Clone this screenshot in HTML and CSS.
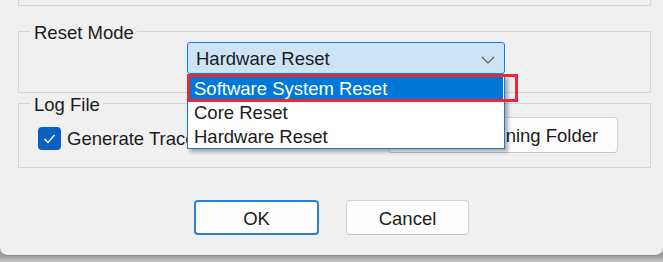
FILE: index.html
```html
<!DOCTYPE html>
<html lang="en">
<head>
<meta charset="utf-8">
<title>Reset Mode</title>
<link rel="stylesheet" href="styles.css">
</head>
<body>
<div class="dialog">
  <div class="group group-top"></div>

  <div class="group group-reset">
    <div class="group-title">Reset Mode</div>
    <div class="combo-wrap">
      <div class="combo">
        <span class="combo-text">Hardware Reset</span>
        <svg class="chevron" width="14" height="8" viewBox="0 0 14 8"><polyline points="1,1 7,7 13,1" fill="none" stroke="#5c5c5c" stroke-width="1.2"/></svg>
      </div>
      <div class="dropdown">
        <div class="item selected">Software System Reset</div>
        <div class="item">Core Reset</div>
        <div class="item">Hardware Reset</div>
        <div class="annot"></div>
      </div>
    </div>
  </div>

  <div class="group group-log">
    <div class="group-title">Log File</div>
    <div class="log-row">
      <span class="check"><svg width="23" height="23" viewBox="0 0 23 23"><polyline points="6.5,12 10,15.5 16.5,8" fill="none" stroke="#ffffff" stroke-width="1.5"/></svg></span>
      <span class="check-label">Generate Trace File</span>
      <button class="btn btn-folder">Open Containing Folder</button>
    </div>
  </div>

  <div class="actions">
    <button class="btn btn-ok">OK</button>
    <button class="btn btn-cancel">Cancel</button>
  </div>
</div>
</body>
</html>
```

FILE: styles.css
```css
html, body {
  margin: 0;
  padding: 0;
}
body {
  width: 663px;
  height: 262px;
  overflow: hidden;
  background: linear-gradient(to bottom, #9c9c9c 0, #9c9c9c 256px, #a2a2a2 257px, #c6c6c6 262px);
  font-family: "Liberation Sans", Arial, sans-serif;
  font-size: 18.5px;
  color: #1b1b1b;
}
.dialog {
  box-sizing: border-box;
  height: 256px;
  background: #f0f0f0;
  border-radius: 0 0 8px 8px;
  border-bottom: 1px solid #8c8c8c;
  padding: 0 12px 0 18px;
  display: flex;
  flex-direction: column;
}
.group {
  border: 1px solid #d6d6d6;
}
.group-top {
  border-top: none;
  height: 5px;
}
.group-title {
  width: max-content;
  margin: -9px 0 0 11px;
  padding: 0 3px 0 4px;
  height: 20px;
  line-height: 20px;
  background: #f0f0f0;
}
.group-reset {
  margin-top: 25px;
  padding-bottom: 18px;
}
.combo-wrap {
  position: relative;
  margin: -1px 0 0 168px;
  width: 318px;
}
.combo {
  box-sizing: border-box;
  height: 32px;
  background: #cce4f7;
  border: 1px solid #1a7bd3;
  border-radius: 3px;
  display: flex;
  align-items: center;
  padding: 1px 9px 0 8px;
}
.combo-text {
  flex: 1;
  line-height: 30px;
}
.chevron {
  margin-top: 3px;
}
.dropdown {
  position: absolute;
  left: 0;
  top: 32px;
  width: 318px;
  height: 75px;
  box-sizing: border-box;
  background: #ffffff;
  border: 1px solid #1a7bd3;
  padding: 2px 1px 0 1px;
  box-shadow: 3px 3px 4px rgba(0, 0, 0, 0.32);
  z-index: 5;
}
.item {
  height: 24px;
  line-height: 24px;
  padding-left: 5px;
  white-space: nowrap;
  overflow: hidden;
}
.item.selected {
  background: #0078d7;
  color: #ffffff;
}
.annot {
  position: absolute;
  left: -1px;
  top: -1px;
  width: 331px;
  height: 28px;
  box-sizing: border-box;
  border: 3px solid #ea2a33;
}
.group-log {
  margin-top: 10px;
  padding-bottom: 14px;
}
.log-row {
  margin-top: 2px;
  height: 36px;
  display: flex;
  align-items: flex-start;
}
.check {
  margin: 10px 0 0 19px;
  width: 23px;
  height: 23px;
  border-radius: 4px;
  background: #0b5fc1;
  display: flex;
}
.check-label {
  margin: 10px 0 0 6px;
  line-height: 23px;
  white-space: nowrap;
}
.btn {
  box-sizing: border-box;
  font-family: inherit;
  font-size: 18.5px;
  color: #1b1b1b;
  background: #fdfdfd;
  border: 1px solid #d3d3d3;
  border-bottom-color: #c4c4c4;
  border-radius: 4px;
  padding: 0;
  line-height: 33px;
  text-align: center;
}
.btn-folder {
  margin-left: auto;
  margin-right: 32px;
  width: 230px;
  height: 36px;
  padding-top: 1px;
  padding-right: 6px;
}
.actions {
  margin: 32px -12px 0 -18px;
  display: flex;
  justify-content: center;
  gap: 27px;
}
.btn-ok {
  width: 125px;
  height: 35px;
  border: 2px solid #2d7fd4;
  line-height: 31px;
  padding-top: 1px;
}
.btn-cancel {
  width: 123px;
  height: 35px;
  padding-top: 1px;
}
```
